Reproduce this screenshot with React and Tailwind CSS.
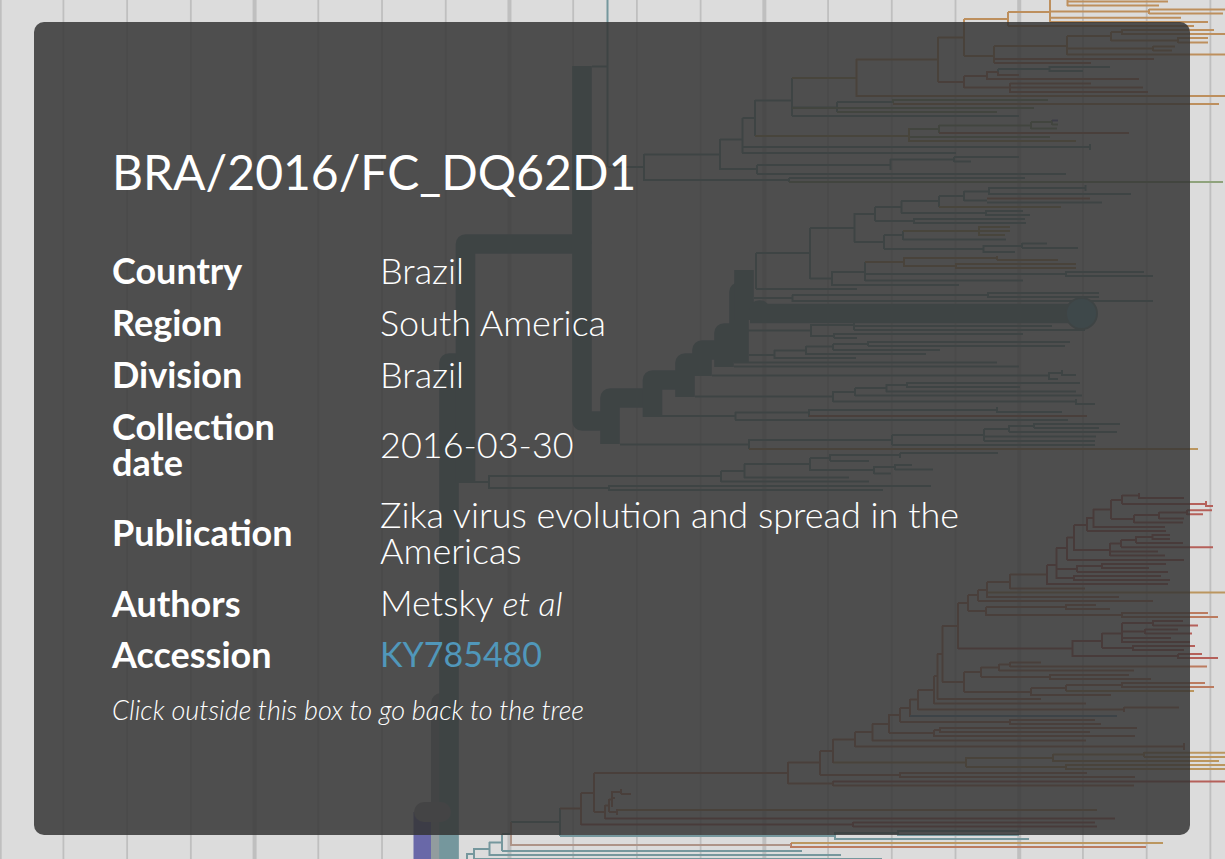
import React from "react";

const TEAL = "#75979d";
const GREEN = "#8fa37c";
const OLIVE = "#b5a067";
const OCHRE = "#bb965f";
const ORANGE = "#bd8f5d";
const RUST = "#bb7b5f";
const RED = "#b5605a";

// Branches of each colour: h holds x1, x2, y triples; v holds x, y1, y2 triples.
const BRANCHES = [
  {
    color: TEAL,
    h: [
      592, 608, 66.5, 608, 644, 167, 644, 720, 154.5, 720, 742.5, 139.5, 742.5, 755, 118, 755, 792, 100.5,
      792, 837, 107.5, 837, 893, 102, 792, 1019, 116, 742, 1090, 147, 742, 956, 153, 720, 757, 169,
      757, 890, 165, 890, 954, 159.5, 954, 1019, 157, 954, 971, 161.5, 757, 1066, 174, 644, 789, 180,
      789, 1025, 178, 998, 1049, 69, 1049, 1110, 67, 1049, 1083, 71,
      756, 810, 253, 810, 854, 228, 854, 875, 214, 875, 901, 207, 901, 939, 201, 939, 964, 196,
      964, 989, 191.5, 989, 1085, 188, 989, 1131, 194, 964, 987, 200.5, 987, 1102, 202.5, 901, 986, 213,
      986, 1023, 211, 986, 1030, 215, 875, 914, 221, 914, 1025, 219, 914, 1026, 223,
      854, 884, 242, 884, 903, 235, 903, 1006, 239.5, 884, 983, 249, 983, 1022, 246, 1022, 1047, 243.5,
      1022, 1078, 248, 983, 1015, 252, 810, 832, 278.5, 832, 865, 272, 865, 1066, 274, 1066, 1144, 272,
      1066, 1153, 276, 865, 1023, 280.5, 832, 959, 285, 756, 857, 289,
      754, 792, 298, 792, 988, 295, 988, 1099, 293, 988, 1099, 297, 792, 1153, 301,
      748, 811, 330.5, 811, 854, 325, 854, 1052, 326, 854, 1085, 330, 811, 834, 336, 834, 1023, 334,
      834, 857, 338, 749, 774, 355, 774, 806, 350.5, 806, 833, 346.5, 833, 868, 344, 868, 1070, 342,
      868, 1065, 346, 833, 940, 350, 806, 926, 354, 774, 856, 358, 734, 997, 362.5, 734, 1019, 366.5,
      712, 1049, 375.5, 1049, 1062, 373, 1062, 1076, 375, 1049, 1058, 379,
      695, 833, 396.5, 833, 855, 392, 855, 886, 388, 886, 907, 385, 907, 1080, 383, 907, 1020, 387,
      886, 1076, 391.5, 855, 1082, 395.5, 833, 1076, 401.5, 1076, 1095, 404,
      662, 735, 416, 735, 809, 412.5, 809, 997, 410, 997, 1062, 412, 735, 1068, 420,
      620, 749, 444.5, 749, 892, 440, 892, 984, 435, 984, 1009, 429, 1009, 1034, 426, 1034, 1120, 424,
      1034, 1099, 428, 1009, 1117, 432, 984, 1096, 436.5, 984, 1095, 441, 892, 1095, 445,
      459, 489, 482, 489, 721, 476, 721, 744, 471, 744, 810, 464, 810, 830, 458, 830, 900, 455,
      900, 998, 453, 830, 869, 461, 810, 874, 470, 874, 895, 467, 895, 912, 465, 895, 933, 469.5,
      874, 891, 473.5, 744, 849, 477.5, 721, 869, 481.5, 489, 609, 488, 609, 931, 486, 609, 883, 490,
      511, 560, 822, 560, 835, 836, 835, 898, 833, 898, 1019, 831, 898, 1019, 835, 835, 1029, 839,
      502, 511, 834, 502, 802, 851, 489, 502, 842.5, 489, 841, 855, 474, 489, 849, 474, 882, 859, 467, 474, 854,
    ],
    v: [
      607.5, 0, 167, 644, 154, 181, 720, 139, 170, 742.5, 118, 153, 755, 100, 118, 755, 118, 136,
      792, 78, 116, 837, 102, 112, 1090, 144, 150, 757, 165, 174, 890.5, 159, 170, 954, 157, 162,
      789, 178, 182, 998, 69, 72, 1049.5, 66, 72,
      756, 253, 289, 810, 228, 279, 854.5, 213, 242, 875, 207, 221, 901.5, 201, 213, 939, 196, 207,
      964, 191, 201, 989, 187, 195, 1085.5, 185, 191, 986, 210, 216, 914, 218, 224, 884, 235, 249,
      903, 231, 240, 983.5, 245, 253, 1022, 243, 248, 832, 271, 286, 865, 262, 281, 1066, 271, 277,
      792.5, 295, 302, 988, 292, 298, 811, 324, 337, 854, 322, 330, 834, 333, 338, 774.5, 350, 359,
      806, 346, 355, 833, 344, 350, 868, 341, 346, 1049, 372, 380, 1062, 370, 376, 833, 391, 402,
      855, 388, 396, 886.5, 384, 392, 907, 382, 388, 1076, 399, 405, 735.5, 412, 420, 809, 409, 417,
      997, 407, 413, 749, 439, 449, 892, 435, 445, 984, 429, 441, 1009, 425, 432, 1034, 423, 428,
      489, 475, 489, 721, 471, 482, 744.5, 464, 478, 810, 458, 471, 830, 454, 461, 900, 453, 458,
      874, 466, 474, 895, 464, 470, 609, 485, 491, 560, 808, 836, 835, 832, 840, 898, 830, 836,
      502, 834, 851, 489.5, 842, 856, 474, 848, 859, 467, 853, 859,
    ],
  },
  {
    color: GREEN,
    h: [
      893, 1048, 100, 792, 1034, 108, 837, 997, 112, 939, 1031, 125.5, 1031, 1052, 122, 1052, 1058, 124.5,
      1031, 1057, 128.5, 909, 1050, 137, 789, 1223, 182, 909, 939, 129,
    ],
    v: [893, 99, 103, 939, 125, 133, 1031, 122, 129, 1052, 120, 125],
  },
  {
    color: OLIVE,
    h: [792, 856, 78, 755, 909, 136, 909, 1076, 141, 939, 1061, 207, 903, 979, 231, 979, 1010, 227, 979, 1010, 231, 979, 1005, 235],
    v: [909, 128, 142, 979, 226, 236],
  },
  {
    color: OCHRE,
    h: [
      865, 904, 262, 904, 997, 258, 997, 1058, 260, 904, 956, 266, 956, 1076, 264, 956, 1076, 268,
      749, 1198, 449, 987, 1225, 592.5, 833, 966, 762.5, 966, 1053, 758, 1053, 1144, 754.5,
      1144, 1225, 752.8, 1144, 1225, 757, 1053, 1219, 761, 966, 1066, 767, 1066, 1225, 765, 1066, 1225, 769,
      791, 1163, 843, 1066, 1194, 691,
    ],
    v: [904, 257, 267, 997, 256, 260, 956, 263, 269, 966, 757, 767, 1053, 754, 762, 1144, 752, 757, 1066, 764, 770],
  },
  {
    color: ORANGE,
    h: [
      856, 1225, 96, 893, 1219, 104, 938, 964, 37.5, 964, 1008, 19, 1008, 1050, 12,
      1008, 1194, 26, 1050, 1149, 11.5, 1149, 1225, 9.5, 1149, 1223, 13.5, 1067, 1168, 1.5,
      1067, 1159, 5.5, 1050, 1181, 17.8, 1050, 1208, 22, 1122, 1214, 30, 1122, 1225, 34,
      1178, 1208, 38, 1178, 1208, 42.5, 1067, 1225, 54.5, 617, 1097, 810,
      856, 938, 59.5, 964, 994, 56, 994, 1067, 46, 1067, 1111, 36, 1111, 1122, 32, 1111, 1178, 40.5,
      1067, 1153, 48.5, 1153, 1175, 46.5, 1153, 1172, 50.5,
    ],
    v: [
      938, 37, 82, 964, 19, 56, 1008, 12, 26, 1050, 0, 22, 1149, 9, 14, 1067.5, 0, 6, 1178, 37, 43,
      856.5, 59, 97, 994, 46, 63, 1067, 36, 55, 1111, 32, 41, 1122, 29, 35, 1153, 46, 51,
    ],
  },
  {
    color: RUST,
    h: [
      994, 1154, 59, 994, 1091, 63, 938, 964, 82, 964, 987, 76, 987, 998, 72, 998, 1019, 75,
      987, 1139, 79, 964, 1010, 87.5, 1010, 1091, 83.5, 1010, 1143, 87.5, 1010, 1148, 92,
      986, 1066, 607, 1066, 1096, 605, 1066, 1110, 609, 978, 1153, 601, 1010, 1207, 666.5, 937, 1041, 699,
      939, 1129, 133, 987, 1090, 198.5, 809, 1087, 416, 1010, 1047, 574.5, 1010, 1085, 588.5, 987, 1010, 582,
      987, 1119, 597, 978, 987, 590, 968, 978, 595, 968, 986, 611, 986, 1122, 615, 1122, 1208, 613,
      1122, 1218, 617, 958, 968, 603, 942, 958, 626, 942, 964, 682, 964, 981, 672, 981, 999, 667.5,
      999, 1010, 664.5, 1010, 1041, 662.5, 999, 1134, 670.5, 981, 1050, 677, 1050, 1129, 675,
      1050, 1151, 679, 964, 1031, 692, 1031, 1066, 688, 1066, 1122, 685, 1122, 1205, 683, 1122, 1214, 687,
      1031, 1111, 695, 937, 942, 654, 934, 1086, 703.5, 934, 937, 676, 918, 934, 690, 918, 1124, 709.5,
      1124, 1179, 707.5, 910, 918, 699.5, 900, 910, 708, 900, 1010, 722, 1010, 1095, 720,
      1010, 1101, 724, 889, 900, 715, 889, 934, 733, 934, 940, 730, 940, 1137, 728, 940, 1090, 732,
      934, 1135, 736, 872, 889, 724, 872, 1086, 740.5, 855, 872, 732, 855, 1184, 746.5, 833, 855, 739.5,
      820, 833, 751, 820, 900, 775, 900, 1087, 773, 900, 1135, 777, 788, 820, 762.5, 788, 833, 783.5,
      833, 1134, 785.5, 594, 788, 773, 581, 594, 793, 594, 605, 812, 605, 609, 805.5, 609, 612, 799.5,
      612, 621, 792, 621, 631, 794, 612, 615, 798, 609, 617, 812, 560, 581, 808.5, 791, 1146, 847,
    ],
    v: [
      964, 76, 88,
      987, 71, 80, 998, 72, 76, 1010, 83, 93, 1066, 604, 610,
      1010, 574, 589, 987, 582, 598, 978, 590, 601, 968, 595, 611, 986, 607, 616, 1122, 612, 618,
      958, 603, 649, 942.5, 626, 682, 964, 672, 692, 981, 667, 677, 999, 664, 671, 1010, 662, 667,
      1050, 674, 680, 1031, 688, 696, 1066, 685, 691, 1122, 682, 688, 937.5, 654, 699, 934, 676, 704,
      918, 690, 710, 1124, 707, 712, 910, 699, 717, 900, 708, 722, 1010, 719, 725, 889, 714, 733,
      934, 730, 737, 940, 727, 733, 872.5, 724, 741, 855, 732, 747, 1184, 743, 750, 833, 739, 763,
      820, 751, 775, 900, 772, 778, 788, 762, 784, 833, 781, 786, 594, 773, 812, 581, 793, 825,
      605, 805, 819, 609, 799, 812, 612, 791, 807, 621, 789, 794, 617, 809, 815, 791, 843, 848,
    ],
  },
  {
    color: RED,
    h: [
      1122, 1139, 495.5, 1139, 1184, 498, 1111, 1122, 500, 1122, 1206, 504, 1206, 1213, 506,
      1111, 1134, 519, 1134, 1159, 515, 1159, 1187, 512.5, 1187, 1212, 510.3, 1187, 1203, 514.3,
      1159, 1184, 518.5, 1134, 1183, 522.5, 1093, 1111, 509.5, 1093, 1165, 527, 1087, 1093, 518,
      1087, 1166, 531, 1074, 1087, 525, 1074, 1110, 550, 1110, 1121, 543.5, 1121, 1136, 540,
      1136, 1152, 537, 1152, 1170, 535, 1152, 1170, 539, 1136, 1183, 543, 1121, 1213, 547.3,
      1110, 1158, 551.5, 1110, 1165, 555.5, 1067, 1074, 537.5, 1067, 1184, 560, 1056, 1067, 548,
      1056, 1077, 569, 1077, 1102, 566, 1102, 1166, 564, 1102, 1149, 568, 1077, 1168, 572,
      1056, 1074, 578, 1074, 1161, 576, 1074, 1170, 580, 1047, 1056, 565, 1047, 1168, 584,
      958, 1072, 648.5, 1072, 1102, 641, 1102, 1122, 633.5, 1122, 1153, 623, 1153, 1183, 621,
      1153, 1198, 625.5, 1122, 1145, 631.5, 1145, 1178, 629.5, 1145, 1192, 633.5, 1122, 1171, 638,
      1122, 1190, 642, 1102, 1133, 648, 1133, 1195, 646, 1133, 1184, 650, 1072, 1178, 656,
      1178, 1202, 654, 1178, 1218, 658, 833, 1225, 781.5, 605, 1115, 818.5, 581, 853, 824.5,
      853, 1095, 822.5, 853, 1097, 826.5,
    ],
    v: [
      1139, 493, 499, 1122, 495, 504, 1111, 500, 519, 1206, 501, 507, 1134, 515, 523, 1159, 512, 519,
      1187, 510, 515, 1093.5, 509, 528, 1087, 517, 531, 1074, 525, 551, 1110, 543, 556, 1121, 540, 547,
      1136, 536, 543, 1152.5, 534, 540, 1067, 537, 560, 1056.5, 548, 579, 1077, 565, 572, 1102, 563, 569,
      1074, 575, 581, 1047, 565, 585, 1072.5, 640, 657, 1102, 633, 648, 1122, 623, 643, 1153, 620, 626,
      1145, 629, 634, 1133, 645, 651, 1178, 654, 659, 853, 822, 827,
    ],
  },
  { color: "#ae9488", h: [511, 791, 845], v: [511, 822, 846, 502, 834, 835] },
  { color: "#6f94b0", h: [910, 1117, 716], v: [] },
  { color: "#6f6fae", h: [1052, 1058, 120.5], v: [] },
];

const HIGHLIGHT = [
  "M449 859V363H465",
  "M465.5 483V244H582V421H610",
  "M582 66V244",
  "M610 444V398H652",
  "M652.5 417V380H685",
  "M685 397V363H702",
  "M702 376V350H724",
  "M724 367V333H739",
  "M739 362V292H744",
  "M744 320V270",
];

function triples(list, draw) {
  let path = "";
  for (let i = 0; i < list.length; i += 3) path += draw(list[i], list[i + 1], list[i + 2]);
  return path;
}

function branchPath({ h, v }) {
  return (
    triples(h, (x1, x2, y) => `M${x1} ${y}H${x2}`) +
    triples(v, (x, y1, y2) => `M${x} ${y1}V${y2}`)
  );
}

function PhyloTree() {
  const grid = Array.from({ length: 20 }, (_, i) => i);
  return (
    <svg
      className="absolute inset-0 h-full w-full"
      viewBox="0 0 1225 859"
      preserveAspectRatio="xMinYMin slice"
      fill="none"
      aria-hidden="true"
    >
      {grid.map((i) => (
        <path
          key={i}
          d={`M${-0.3 + i * 63.72} 0V859`}
          stroke="#bfbfbf"
          strokeWidth={i % 4 === 0 ? 4 : 1.8}
        />
      ))}
      {BRANCHES.map((set) => (
        <path key={set.color} d={branchPath(set)} stroke={set.color} strokeWidth="2" />
      ))}
      <path d="M423 859V812" stroke="#6968a8" strokeWidth="19" />
      <path d="M441 859V703H449" stroke="#929c9e" strokeWidth="20" strokeLinejoin="round" />
      {HIGHLIGHT.map((d) => (
        <path key={d} d={d} stroke={TEAL} strokeWidth="19.7" strokeLinejoin="round" />
      ))}
      <path d="M759 310H760" stroke={TEAL} strokeWidth="19.7" strokeLinecap="round" />
      <path d="M750 313.5H1081" stroke={TEAL} strokeWidth="19.7" />
      <path d="M424 812H441" stroke="#98989f" strokeWidth="20" strokeLinecap="round" />
      <circle cx="1081.5" cy="313.5" r="15.5" fill="#70b3c4" stroke={TEAL} strokeWidth="2" />
    </svg>
  );
}

const ROWS = [
  ["Country", "Brazil"],
  ["Region", "South America"],
  ["Division", "Brazil"],
  ["Collection date", "2016-03-30"],
  ["Publication", "Zika virus evolution and spread in the Americas"],
  ["Authors", <>Metsky <em className="text-[34px]">et al</em></>],
  [
    "Accession",
    <a
      href="https://www.ncbi.nlm.nih.gov/nuccore/KY785480"
      className="text-[34px] font-normal text-[#5097ba]"
    >
      KY785480
    </a>,
  ],
];

export default function App() {
  return (
    <main className="relative flex min-h-screen overflow-hidden bg-[#dcdcdc] pt-[22px] pr-[35px] pb-6 pl-[34px] font-['Lato',sans-serif] text-white">
      <PhyloTree />
      <section
        role="dialog"
        aria-labelledby="strain"
        className="relative flex-1 rounded-[10px] bg-[#353535]/85 px-[78px] pt-[120px] pb-20"
      >
        <h1 id="strain" className="text-5xl leading-[60px]">BRA/2016/FC_DQ62D1</h1>
        <table className="mt-[42px] w-full table-fixed text-left text-[36px] leading-9">
          <colgroup>
            <col className="w-[268px]" />
            <col />
          </colgroup>
          <tbody>
            {ROWS.map(([label, value]) => (
              <tr key={label} className="group">
                <th scope="row" className="py-2 pr-16 align-middle font-bold group-last:pt-1.5">{label}</th>
                <td className="py-2 pr-16 align-middle font-light group-last:pt-1.5">{value}</td>
              </tr>
            ))}
          </tbody>
        </table>
        <p className="mt-3 text-[27px] leading-9 font-light italic">
          Click outside this box to go back to the tree
        </p>
      </section>
    </main>
  );
}
